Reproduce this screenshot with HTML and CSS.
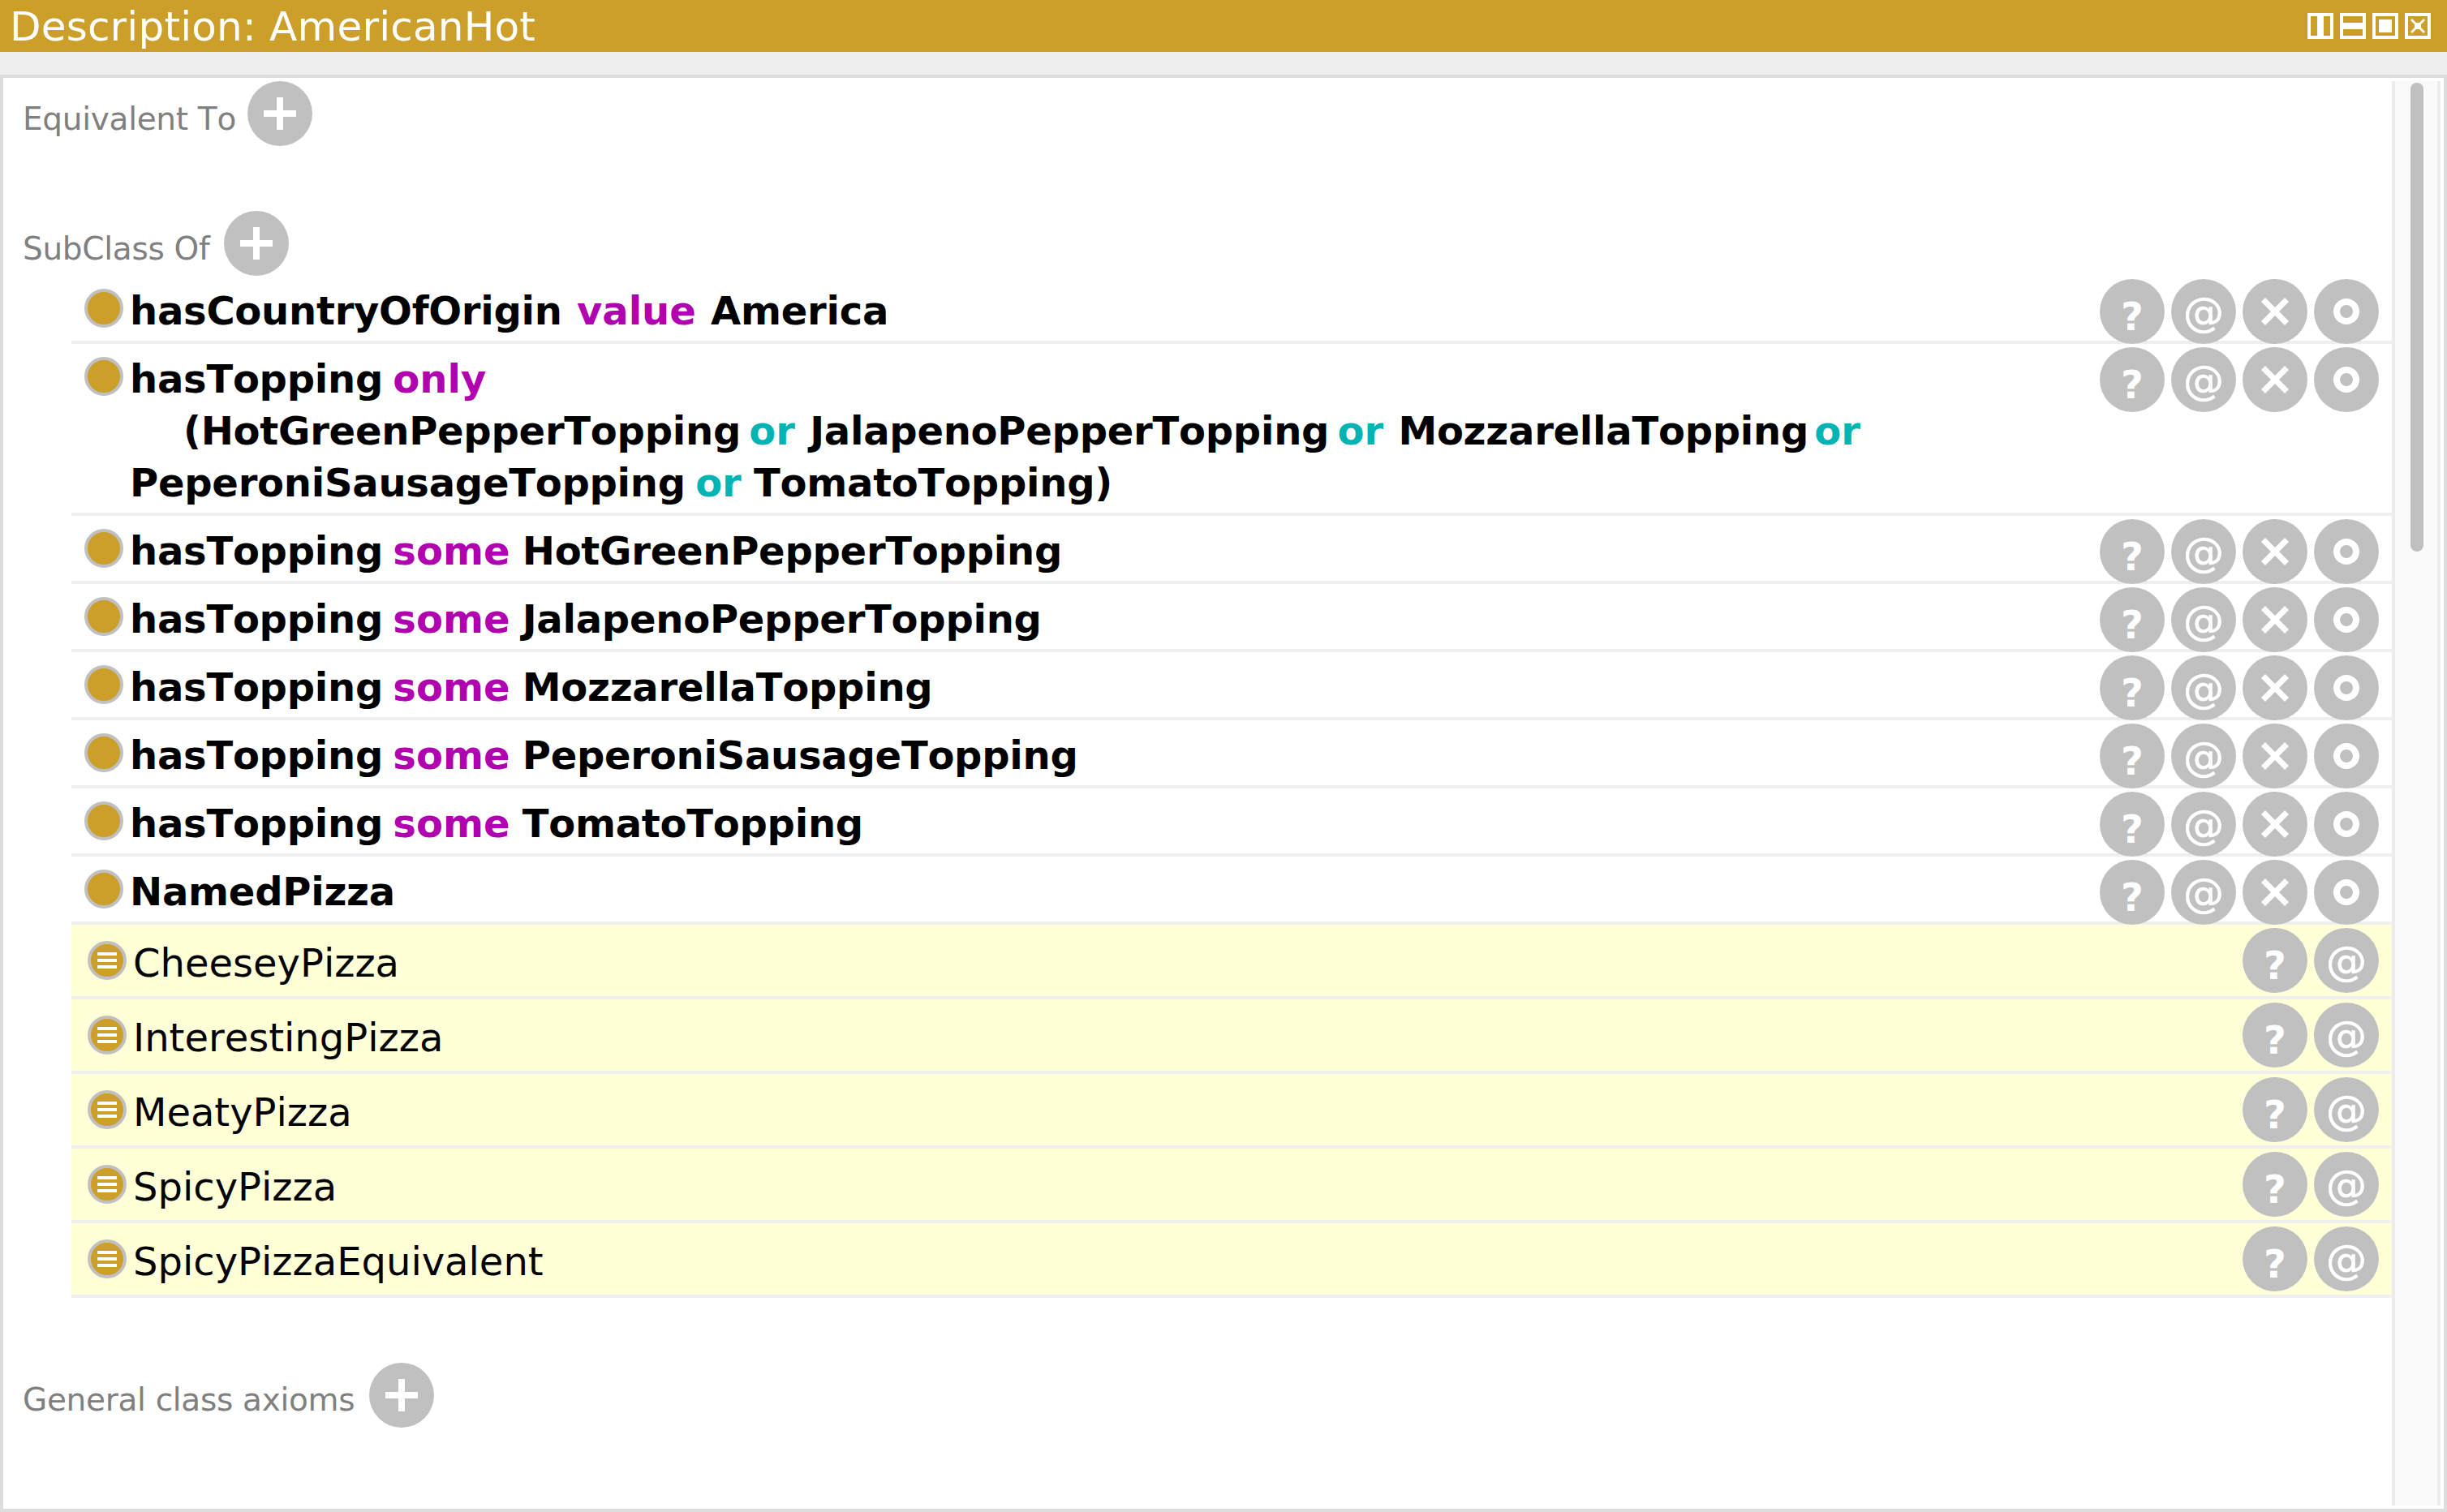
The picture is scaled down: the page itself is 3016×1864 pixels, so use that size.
FILE: index.html
```html
<!DOCTYPE html>
<html lang="en">
<head>
    <meta charset="UTF-8">
    <meta name="viewport" content="width=device-width, initial-scale=1.0">
    <title>Description: AmericanHot</title>
    <link rel="stylesheet" href="styles.css">
</head>
<body>

    <svg class="defs" width="0" height="0">
        <symbol id="plus" viewBox="0 0 40 40"><path d="M16 0h8v16h16v8H24v16h-8V24H0v-8h16z" fill="#fff"/></symbol>
        <symbol id="cross" viewBox="0 0 34 34"><path d="M5 0l12 12L29 0l5 5-12 12 12 12-5 5-12-12L5 34l-5-5 12-12L0 5z" fill="#fff"/></symbol>
        <symbol id="ring" viewBox="0 0 32 32"><circle cx="16" cy="16" r="12" fill="none" stroke="#fff" stroke-width="8"/></symbol>
    </svg>

    <header class="title-bar">
        <span class="title">Description: AmericanHot</span>
        <div class="win-icons">
            <svg class="win-icon" viewBox="0 0 32 32"><path d="M4 4h8v24H4zM20 4h8v24h-8z"/></svg>
            <svg class="win-icon" viewBox="0 0 32 32"><path d="M4 4h24v8H4zM4 20h24v8H4z"/></svg>
            <svg class="win-icon" viewBox="0 0 32 32"><path fill-rule="evenodd" d="M4 4h24v24H4zM8 8v16h16V8z"/></svg>
            <svg class="win-icon" viewBox="0 0 32 32"><path fill-rule="evenodd" d="M4 4h24v24H4zM9 7L7 9l5 5v4l-5 5 2 2 5-5h4l5 5 2-2-5-5v-4l5-5-2-2-5 5h-4z"/></svg>
        </div>
    </header>
    <div class="strip"></div>

    <main class="panel">
        <div class="content">

            <div class="section-head head-equiv">
                <span class="section-label">Equivalent To</span>
                <span class="btn"><svg class="glyph-plus"><use href="#plus"/></svg></span>
            </div>

            <div class="section-head head-sub">
                <span class="section-label">SubClass Of</span>
                <span class="btn"><svg class="glyph-plus"><use href="#plus"/></svg></span>
            </div>

            <div class="rows">
                <div class="row">
                    <span class="bullet"></span>
                    <div class="expr first"><b>hasCountryOfOrigin</b> <i class="kw">value</i> <b>America</b></div>
                    <div class="actions">
                        <span class="btn q">?</span><span class="btn at">@</span>
                        <span class="btn"><svg class="glyph-cross"><use href="#cross"/></svg></span>
                        <span class="btn"><svg class="glyph-ring"><use href="#ring"/></svg></span>
                    </div>
                </div>
                <div class="row">
                    <span class="bullet"></span>
                    <div class="expr">
                        <div><b>hasTopping</b> <i class="kw">only</i></div>
                        <div class="indent"><b>(HotGreenPepperTopping</b> <i class="op">or</i> <b>JalapenoPepperTopping</b> <i class="op">or</i> <b>MozzarellaTopping</b> <i class="op last-or">or</i></div>
                        <div><b>PeperoniSausageTopping</b> <i class="op">or</i> <b>TomatoTopping)</b></div>
                    </div>
                    <div class="actions">
                        <span class="btn q">?</span><span class="btn at">@</span>
                        <span class="btn"><svg class="glyph-cross"><use href="#cross"/></svg></span>
                        <span class="btn"><svg class="glyph-ring"><use href="#ring"/></svg></span>
                    </div>
                </div>
                <div class="row">
                    <span class="bullet"></span>
                    <div class="expr"><b>hasTopping</b> <i class="kw">some</i> <b>HotGreenPepperTopping</b></div>
                    <div class="actions">
                        <span class="btn q">?</span><span class="btn at">@</span>
                        <span class="btn"><svg class="glyph-cross"><use href="#cross"/></svg></span>
                        <span class="btn"><svg class="glyph-ring"><use href="#ring"/></svg></span>
                    </div>
                </div>
                <div class="row">
                    <span class="bullet"></span>
                    <div class="expr"><b>hasTopping</b> <i class="kw">some</i> <b>JalapenoPepperTopping</b></div>
                    <div class="actions">
                        <span class="btn q">?</span><span class="btn at">@</span>
                        <span class="btn"><svg class="glyph-cross"><use href="#cross"/></svg></span>
                        <span class="btn"><svg class="glyph-ring"><use href="#ring"/></svg></span>
                    </div>
                </div>
                <div class="row">
                    <span class="bullet"></span>
                    <div class="expr"><b>hasTopping</b> <i class="kw">some</i> <b>MozzarellaTopping</b></div>
                    <div class="actions">
                        <span class="btn q">?</span><span class="btn at">@</span>
                        <span class="btn"><svg class="glyph-cross"><use href="#cross"/></svg></span>
                        <span class="btn"><svg class="glyph-ring"><use href="#ring"/></svg></span>
                    </div>
                </div>
                <div class="row">
                    <span class="bullet"></span>
                    <div class="expr"><b>hasTopping</b> <i class="kw">some</i> <b>PeperoniSausageTopping</b></div>
                    <div class="actions">
                        <span class="btn q">?</span><span class="btn at">@</span>
                        <span class="btn"><svg class="glyph-cross"><use href="#cross"/></svg></span>
                        <span class="btn"><svg class="glyph-ring"><use href="#ring"/></svg></span>
                    </div>
                </div>
                <div class="row">
                    <span class="bullet"></span>
                    <div class="expr"><b>hasTopping</b> <i class="kw">some</i> <b>TomatoTopping</b></div>
                    <div class="actions">
                        <span class="btn q">?</span><span class="btn at">@</span>
                        <span class="btn"><svg class="glyph-cross"><use href="#cross"/></svg></span>
                        <span class="btn"><svg class="glyph-ring"><use href="#ring"/></svg></span>
                    </div>
                </div>
                <div class="row">
                    <span class="bullet"></span>
                    <div class="expr"><b>NamedPizza</b></div>
                    <div class="actions">
                        <span class="btn q">?</span><span class="btn at">@</span>
                        <span class="btn"><svg class="glyph-cross"><use href="#cross"/></svg></span>
                        <span class="btn"><svg class="glyph-ring"><use href="#ring"/></svg></span>
                    </div>
                </div>

                <div class="row inferred">
                    <span class="bullet"><span class="bars"></span></span>
                    <div class="expr">CheeseyPizza</div>
                    <div class="actions"><span class="btn q">?</span><span class="btn at">@</span></div>
                </div>
                <div class="row inferred">
                    <span class="bullet"><span class="bars"></span></span>
                    <div class="expr">InterestingPizza</div>
                    <div class="actions"><span class="btn q">?</span><span class="btn at">@</span></div>
                </div>
                <div class="row inferred">
                    <span class="bullet"><span class="bars"></span></span>
                    <div class="expr">MeatyPizza</div>
                    <div class="actions"><span class="btn q">?</span><span class="btn at">@</span></div>
                </div>
                <div class="row inferred">
                    <span class="bullet"><span class="bars"></span></span>
                    <div class="expr">SpicyPizza</div>
                    <div class="actions"><span class="btn q">?</span><span class="btn at">@</span></div>
                </div>
                <div class="row inferred">
                    <span class="bullet"><span class="bars"></span></span>
                    <div class="expr">SpicyPizzaEquivalent</div>
                    <div class="actions"><span class="btn q">?</span><span class="btn at">@</span></div>
                </div>
            </div>

            <div class="section-head head-general">
                <span class="section-label">General class axioms</span>
                <span class="btn"><svg class="glyph-plus"><use href="#plus"/></svg></span>
            </div>

        </div>

        <div class="scrollbar"><div class="thumb"></div></div>
    </main>

</body>
</html>
```

FILE: styles.css
```css
html, body {
    margin: 0;
    padding: 0;
}

body {
    width: 3016px;
    height: 1864px;
    display: flex;
    flex-direction: column;
    overflow: hidden;
    background: #ddd;
    font-family: "DejaVu Sans", sans-serif;
    font-kerning: none;
}

.defs {
    position: absolute;
}

.title-bar {
    height: 64px;
    flex: none;
    display: flex;
    align-items: center;
    justify-content: space-between;
    padding: 0 20px 0 12px;
    background: #cc9f2a;
}

.title {
    font-size: 50px;
    letter-spacing: 0.2px;
    padding-top: 2px;
    color: #fff;
}

.win-icons {
    display: flex;
    gap: 8px;
}

.win-icon {
    width: 32px;
    height: 32px;
    background: #fff;
    fill: #cc9f2a;
}

.strip {
    height: 28px;
    flex: none;
    background: #eee;
}

.panel {
    flex: 1;
    display: flex;
    margin: 4px;
    background: #fff;
    min-height: 0;
}

.content {
    flex: 1;
    min-width: 0;
}

.section-head {
    display: flex;
    align-items: center;
    height: 80px;
    padding-left: 24px;
}

.head-equiv {
    margin-top: 4px;
}

.head-sub {
    margin-top: 80px;
}

.head-general {
    margin-top: 80px;
}

.section-label {
    font-size: 39px;
    letter-spacing: -0.3px;
    color: #808080;
    margin-right: 14px;
    padding-top: 12px;
}

.head-sub .section-label {
    margin-right: 18px;
}

.head-general .section-label {
    margin-right: 18px;
    padding-top: 10px;
}

.btn {
    width: 80px;
    height: 80px;
    flex: none;
    display: flex;
    align-items: center;
    justify-content: center;
    border-radius: 50%;
    background: #c0c0c0;
    color: #fff;
    font-size: 48px;
    line-height: 1;
    box-sizing: border-box;
}

.btn.q {
    font-weight: bold;
    padding-top: 12px;
}

.btn.at {
    padding-top: 2px;
    font-size: 50px;
    -webkit-text-stroke: 0.6px #fff;
}

.glyph-plus {
    width: 40px;
    height: 40px;
}

.glyph-cross {
    width: 34px;
    height: 34px;
}

.glyph-ring {
    width: 32px;
    height: 32px;
}

.rows {
    margin-left: 84px;
}

.row {
    display: flex;
    align-items: flex-start;
    padding-top: 4px;
    border-bottom: 4px solid #f0f0f0;
    background: #fff;
}

.bullet {
    width: 40px;
    height: 40px;
    flex: none;
    display: flex;
    align-items: center;
    justify-content: center;
    margin: 12px 8px 0 16px;
    border: 4px solid #c0c0c0;
    border-radius: 50%;
    background: #cc9f2a;
}

.expr {
    flex: 1;
    min-width: 0;
    padding: 7px 0 5px;
    font-size: 48px;
    line-height: 64px;
    white-space: nowrap;
}

.expr b {
    font-weight: bold;
    letter-spacing: -0.25px;
    color: #000;
}

.expr i {
    font-style: normal;
    font-weight: bold;
}

.first {
    word-spacing: 3px;
}

.kw {
    margin-left: -3px;
    color: #b000b0;
}

.first .kw {
    margin-left: 0;
}

.op {
    margin-left: -3px;
    color: #00b4b4;
}

.indent {
    padding-left: 66px;
}

.indent .op {
    margin-left: -5px;
    margin-right: 3px;
}

.indent .last-or {
    margin-left: -8px;
}

.actions {
    display: flex;
    gap: 8px;
    margin-bottom: -4px;
    padding-right: 16px;
}

.inferred {
    background: #ffffd8;
}

.inferred .bullet {
    margin: 16px 8px 0 20px;
}

.inferred .expr {
    padding: 11px 0 9px;
}

.inferred .actions {
    margin-bottom: 4px;
}

.bars {
    width: 24px;
    height: 20px;
    background: repeating-linear-gradient(#fff 0 4px, transparent 4px 8px);
}

.scrollbar {
    width: 60px;
    flex: none;
    margin: 4px 4px 4px 0;
    box-sizing: border-box;
    border-left: 4px solid #ececec;
    border-right: 4px solid #ececec;
    background: #fafafa;
    display: flex;
    justify-content: center;
}

.thumb {
    width: 16px;
    height: 578px;
    margin: 2px 0 0 2px;
    border-radius: 8px;
    background: #c0c0c0;
}
```
